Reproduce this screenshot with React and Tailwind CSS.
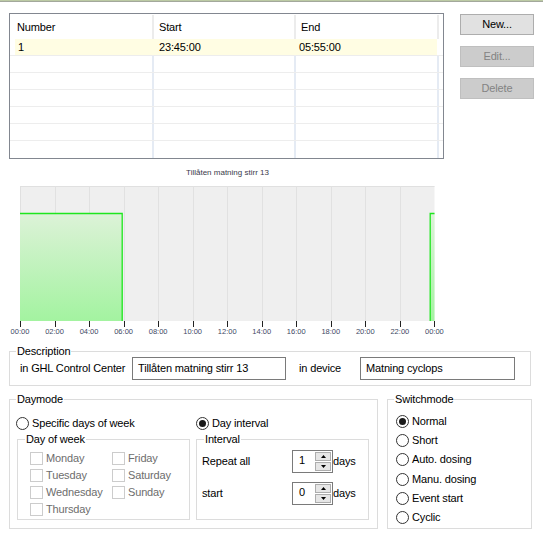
import React from "react";

const W = 414.5;
const STEP = W / 12;

function Radio({ checked }) {
  return (
    <span className="w-[13px] h-[13px] rounded-full border border-[#333333] bg-white flex items-center justify-center shrink-0">
      {checked && <span className="w-[7px] h-[7px] rounded-full bg-[#1a1a1a]" />}
    </span>
  );
}

function Check({ label }) {
  return (
    <div className="flex items-center h-[13px] gap-[3px]">
      <span className="w-[13px] h-[13px] border border-[#cccccc] bg-white shrink-0" />
      <span className="text-[#6d6d6d] whitespace-nowrap">{label}</span>
    </div>
  );
}

function Group({ label, className, labelClass, children }) {
  return (
    <div className={`relative border border-[#dcdcdc] ${className}`}>
      <span className={`absolute -top-[7px] bg-white px-px leading-[13px] whitespace-nowrap ${labelClass}`}>
        {label}
      </span>
      {children}
    </div>
  );
}

function Spin({ value }) {
  return (
    <div className="flex w-[41px] h-[23px] border border-[#7a7a7a] bg-white">
      <div className="flex-1 pl-[6px] pt-[3px] leading-[13px]">{value}</div>
      <div className="flex flex-col w-[17px] gap-px py-px pr-px">
        <div className="flex-1 bg-[#e6e6e6] border border-[#adadad] flex items-center justify-center">
          <svg width="5" height="3" viewBox="0 0 5 3"><path d="M2.5 0 L5 3 L0 3 Z" fill="#000" /></svg>
        </div>
        <div className="flex-1 bg-[#e6e6e6] border border-[#adadad] flex items-center justify-center">
          <svg width="5" height="3" viewBox="0 0 5 3"><path d="M0 0 L5 0 L2.5 3 Z" fill="#000" /></svg>
        </div>
      </div>
    </div>
  );
}

function BodyRow({ line = true }) {
  return (
    <div className={`flex h-[17px] ${line ? "border-b border-[#ededed]" : ""}`}>
      <div className="w-[142px]" />
      <div className="w-[2px] bg-[#e5ebf4]" />
      <div className="w-[140px]" />
      <div className="w-[2px] bg-[#e5ebf4]" />
      <div className="w-[141px]" />
      <div className="w-[2px] bg-[#e5ebf4]" />
    </div>
  );
}

const labels = ["00:00", "02:00", "04:00", "06:00", "08:00", "10:00", "12:00", "14:00", "16:00", "18:00", "20:00", "22:00", "00:00"];

export default function App() {
  const x1 = (W * (5 + 55 / 60)) / 24;
  const x2 = (W * 23.75) / 24;
  return (
    <div className="w-[543px] h-[553px] bg-white overflow-hidden font-['Liberation_Sans',Arial,sans-serif] text-[11px] leading-[13px] tracking-[-0.15px] text-black">
      <div className="h-px bg-[#bccaa4]" />
      <div className="h-px bg-[#a3a89c]" />

      {/* top: table + buttons */}
      <div className="flex pl-[9px] pt-[11px]">
        <div className="w-[435px] h-[146px] border border-[#828790] bg-white">
          <div className="flex h-[25px]">
            <div className="w-[142px] pl-[7px] pt-[2px] flex items-center">Number</div>
            <div className="w-[2px] mt-px bg-[#ececec]" />
            <div className="w-[140px] pl-[5px] pt-[2px] flex items-center">Start</div>
            <div className="w-[2px] mt-px bg-[#ececec]" />
            <div className="w-[141px] pl-[5px] pt-[2px] flex items-center">End</div>
            <div className="w-[2px] mt-px bg-[#ececec]" />
          </div>
          <div className="h-[17px] border-b border-[#ededed] pl-[5px]">
            <div className="flex w-[422px] h-[16px] bg-[#fffde3] items-start pt-[2px]">
              <div className="w-[139px] pl-[3px]">1</div>
              <div className="w-[142px] pl-[5px]">23:45:00</div>
              <div className="pl-[3px]">05:55:00</div>
            </div>
          </div>
          <BodyRow />
          <BodyRow />
          <BodyRow />
          <BodyRow />
          <BodyRow />
          <BodyRow line={false} />
        </div>
        <div className="flex flex-col ml-[16px] mt-px gap-[11px]">
          <div className="w-[74px] h-[21px] bg-[#e1e1e1] border border-[#adadad] flex items-center justify-center">New...</div>
          <div className="w-[74px] h-[21px] bg-[#cccccc] border border-[#bfbfbf] text-[#838383] flex items-center justify-center">Edit...</div>
          <div className="w-[74px] h-[21px] bg-[#cccccc] border border-[#bfbfbf] text-[#838383] flex items-center justify-center">Delete</div>
        </div>
      </div>

      {/* chart */}
      <div className="pl-[20px] mt-[9px]">
        <div className="w-[415px] h-[10px] text-center text-[8px] leading-[10px] tracking-normal text-[#3a3a4a]">Tillåten matning stirr 13</div>
        <svg className="block mt-[8px]" width="416" height="141" viewBox="0 0 416 141">
          <defs>
            <linearGradient id="g" x1="0" y1="0" x2="0" y2="1">
              <stop offset="0" stopColor="#ddf2d8" />
              <stop offset="1" stopColor="#a3f3a0" />
            </linearGradient>
          </defs>
          <rect x="0" y="0" width={W} height="135" fill="#efefef" />
          <line x1="0" y1="0.5" x2={W} y2="0.5" stroke="#e0e0e0" />
          <line x1="0.5" y1="0" x2="0.5" y2="135" stroke="#e0e0e0" />
          {Array.from({ length: 11 }, (_, i) => (
            <line key={i} x1={Math.round(STEP * (i + 1)) + 0.5} y1="0" x2={Math.round(STEP * (i + 1)) + 0.5} y2="135" stroke="#e1e1e1" />
          ))}
          <rect x="0" y="27" width={x1} height="108" fill="url(#g)" />
          <path d={`M0 27.5 H${x1.toFixed(1)} V135`} fill="none" stroke="#1ee61e" strokeWidth="1.3" />
          <rect x={x2} y="27" width={W - x2} height="108" fill="url(#g)" />
          <path d={`M${x2.toFixed(1)} 135 V27.5 H${W}`} fill="none" stroke="#1ee61e" strokeWidth="1.3" />
          {Array.from({ length: 13 }, (_, i) => {
            const x = Math.min(Math.round(STEP * i) + 0.5, W);
            return <line key={i} x1={x} y1="135" x2={x} y2="141" stroke="#222" />;
          })}
        </svg>
        <div className="flex h-[10px] -ml-[17.27px]">
          {labels.map((l, i) => (
            <div key={i} className="w-[34.54px] shrink-0 text-center text-[7.5px] leading-[10px] tracking-normal text-[#404863]">{l}</div>
          ))}
        </div>
      </div>

      {/* description */}
      <div className="pl-[9px] mt-[14px]">
        <Group label="Description" labelClass="left-[6px]" className="w-[522px] h-[35px]">
          <div className="flex items-center h-[23px] mt-[5px] pl-[10px]">
            <div className="w-[112px] whitespace-nowrap">in GHL Control Center</div>
            <div className="w-[154px] h-[23px] border border-[#7a7a7a] pl-[5px] pt-[4px] whitespace-nowrap">Tillåten matning stirr 13</div>
            <div className="w-[61px] ml-[13px]">in device</div>
            <div className="w-[155px] h-[23px] border border-[#7a7a7a] pl-[5px] pt-[4px] whitespace-nowrap">Matning cyclops</div>
          </div>
        </Group>
      </div>

      {/* bottom groups */}
      <div className="flex pl-[9px] mt-[13px] gap-[9px]">
        <Group label="Daymode" labelClass="left-[6px]" className="w-[369px] h-[130px]">
          <div className="flex pl-[7px] gap-[6px]">
            <div className="flex flex-col w-[173px]">
              <div className="flex items-center gap-[3px] h-[13px] mt-[17px] -ml-px">
                <Radio />
                <span>Specific days of week</span>
              </div>
              <Group label="Day of week" labelClass="left-[7px]" className="w-[173px] h-[81px] mt-[9px]">
                <div className="grid grid-cols-[82px_auto] pl-[12px] pt-[12px] gap-y-[4px]">
                  <Check label="Monday" />
                  <Check label="Friday" />
                  <Check label="Tuesday" />
                  <Check label="Saturday" />
                  <Check label="Wednesday" />
                  <Check label="Sunday" />
                  <Check label="Thursday" />
                </div>
              </Group>
            </div>
            <div className="flex flex-col w-[173px]">
              <div className="flex items-center gap-[3px] h-[13px] mt-[17px]">
                <Radio checked />
                <span>Day interval</span>
              </div>
              <Group label="Interval" labelClass="left-[7px]" className="w-[173px] h-[81px] mt-[9px]">
                <div className="flex flex-col pl-[5px] pt-[10px] gap-[9px]">
                  <div className="flex items-center">
                    <div className="w-[90px]">Repeat all</div>
                    <Spin value="1" />
                    <div>days</div>
                  </div>
                  <div className="flex items-center">
                    <div className="w-[90px]">start</div>
                    <Spin value="0" />
                    <div>days</div>
                  </div>
                </div>
              </Group>
            </div>
          </div>
        </Group>
        <Group label="Switchmode" labelClass="left-[6px]" className="w-[145px] h-[130px]">
          <div className="flex flex-col pl-[8px] pt-[12px]">
            {["Normal", "Short", "Auto. dosing", "Manu. dosing", "Event start", "Cyclic"].map((t, i) => (
              <div key={t} className="flex items-center gap-[3px] h-[19.2px]">
                <Radio checked={i === 0} />
                <span>{t}</span>
              </div>
            ))}
          </div>
        </Group>
      </div>
    </div>
  );
}
